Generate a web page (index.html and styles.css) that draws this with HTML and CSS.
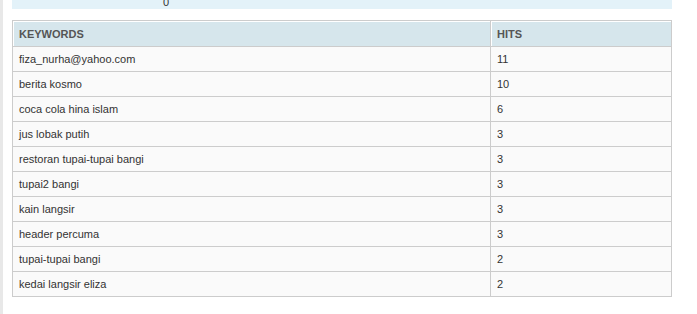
FILE: index.html
```html
<!DOCTYPE html>
<html>
<head>
<meta charset="utf-8">
<link rel="stylesheet" href="styles.css">
</head>
<body>
<div class="page">
  <div class="summary"><span class="count">0</span></div>
  <table class="kw">
    <thead>
      <tr><th class="c1">KEYWORDS</th><th class="c2">HITS</th></tr>
    </thead>
    <tbody>
      <tr><td>fiza_nurha@yahoo.com</td><td>11</td></tr>
      <tr><td>berita kosmo</td><td>10</td></tr>
      <tr><td>coca cola hina islam</td><td>6</td></tr>
      <tr><td>jus lobak putih</td><td>3</td></tr>
      <tr><td>restoran tupai-tupai bangi</td><td>3</td></tr>
      <tr><td>tupai2 bangi</td><td>3</td></tr>
      <tr><td>kain langsir</td><td>3</td></tr>
      <tr><td>header percuma</td><td>3</td></tr>
      <tr><td>tupai-tupai bangi</td><td>2</td></tr>
      <tr><td>kedai langsir eliza</td><td>2</td></tr>
    </tbody>
  </table>
</div>
</body>
</html>
```
FILE: styles.css
```css
html, body { margin: 0; padding: 0; background: #fff; }
body { font-family: "Liberation Sans", Arial, sans-serif; font-size: 11px; color: #333; }
.page { border-left: 3px solid #e8e8e8; height: 314px; box-sizing: border-box; padding-left: 9px; width: 672px; }
.summary { background: #e3f2f9; height: 9px; width: 660px; position: relative; overflow: hidden; }
.count { position: absolute; left: 151px; top: -4px; font-size: 11px; color: #333; }
.kw { margin-top: 11px; width: 660px; border-collapse: collapse; table-layout: fixed; }
.kw th, .kw td { border: 1px solid #ccc; text-align: left; padding: 0 6px; height: 25px; box-sizing: border-box; }
.kw th { background: #d6e6ec; color: #555; font-weight: bold; height: 26px; box-shadow: inset 1px 1px 0 #fff; }
.kw td { background: #fafafa; }
.kw .c1 { width: 478px; }
```
